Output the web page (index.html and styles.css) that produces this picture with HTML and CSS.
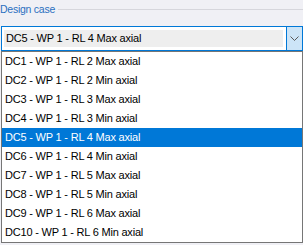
FILE: index.html
```html
<!DOCTYPE html>
<html lang="en">
<head>
  <meta charset="UTF-8">
  <meta name="viewport" content="width=device-width, initial-scale=1.0">
  <title>Design case</title>
  <link rel="stylesheet" href="styles.css">
</head>
<body>
  <!-- Group box -->
  <div class="group">
    <div class="legend">
      <span class="legend-text">Design case</span>
      <span class="legend-rule"></span>
    </div>

    <!-- Combo box (open) -->
    <div class="combo">
      <div class="combo-field">DC5 - WP 1 - RL 4 Max axial</div>
      <div class="combo-button">
        <svg xmlns="http://www.w3.org/2000/svg" viewBox="0 0 9 5" width="9" height="5">
          <path d="M0.5 0.5l4 4 4-4"></path>
        </svg>
      </div>
    </div>

    <ul class="dropdown">
      <li>DC1 - WP 1 - RL 2 Max axial</li>
      <li>DC2 - WP 1 - RL 2 Min axial</li>
      <li>DC3 - WP 1 - RL 3 Max axial</li>
      <li>DC4 - WP 1 - RL 3 Min axial</li>
      <li class="selected">DC5 - WP 1 - RL 4 Max axial</li>
      <li>DC6 - WP 1 - RL 4 Min axial</li>
      <li>DC7 - WP 1 - RL 5 Max axial</li>
      <li>DC8 - WP 1 - RL 5 Min axial</li>
      <li>DC9 - WP 1 - RL 6 Max axial</li>
      <li>DC10 - WP 1 - RL 6 Min axial</li>
    </ul>
  </div>
</body>
</html>
```

FILE: styles.css
```css
body {
  margin: 0;
  padding: 0;
  background: #f0f0f5;
  font-family: "Liberation Sans", Arial, sans-serif;
  font-size: 11px;
  letter-spacing: -0.2px;
  color: #000;
  overflow: hidden;
}
.group {
  padding-left: 1px;
}
.legend {
  display: flex;
  align-items: center;
  height: 26px;
  margin-left: -1px;
  padding-bottom: 8px;
  box-sizing: border-box;
}
.legend-text {
  color: #2a6fc0;
  font-size: 10.5px;
  letter-spacing: -0.25px;
  padding-right: 3px;
}
.legend-rule {
  flex: 1;
  height: 1px;
  background: #d6d6dc;
}
.combo {
  display: flex;
  width: 302px;
  height: 25px;
  box-sizing: border-box;
  border: 1px solid #0078d7;
  background: #fff;
}
.combo-field {
  flex: 1;
  margin: 3px 3px 3px 2px;
  background: #eeeeee;
  line-height: 17px;
  padding-left: 2px;
}
.combo-button {
  width: 15px;
  display: flex;
  align-items: center;
  justify-content: center;
  border-left: 1px solid #0078d7;
  background: #cce4f7;
}
.combo-button svg {
  fill: none;
  stroke: #5a5a5a;
  stroke-width: 1;
}
.dropdown {
  list-style: none;
  margin: 0;
  padding: 0;
  width: 302px;
  box-sizing: border-box;
  border: 1px solid #767676;
  background: #fff;
  box-shadow: 1px 2px 0 #a0a0a0;
}
.dropdown li {
  height: 19px;
  line-height: 19px;
  padding-left: 3px;
  white-space: nowrap;
}
.dropdown li.selected {
  background: #0078d7;
  color: #fff;
}
```
